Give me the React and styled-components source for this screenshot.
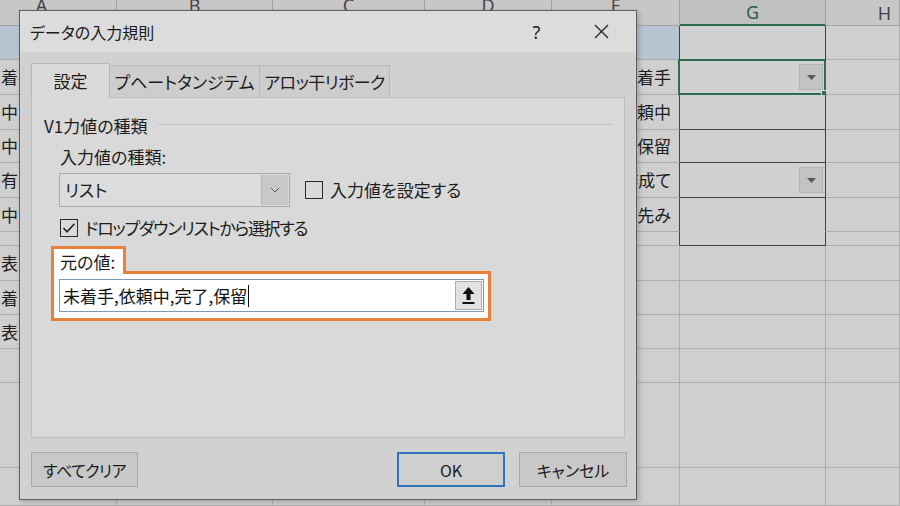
import React from 'react';
import styled, { createGlobalStyle } from 'styled-components';

const GlobalStyle = createGlobalStyle`
  html, body { margin: 0; padding: 0; }
  body {
    width: 900px; height: 506px; overflow: hidden;
    background: #cfcfcf;
    font-family: "Noto Sans CJK JP", "Noto Sans", sans-serif;
    font-feature-settings: "palt";
    color: #1c1c1c;
  }
  #root { position: relative; width: 900px; height: 506px; overflow: hidden; }
`;

const ORANGE = '#e8823a';
const GRID = '#adadad';
const DARK = '#3f3f3f';

/* ---------------- spreadsheet ---------------- */
const Sheet = styled.div`
  display: grid;
  grid-template-columns: 117px 156px 152px 127px 128px 146px 1fr;
  grid-template-rows: 26px 34px 35px 35px 33px 35px 34px 14px 35px 34px 34px 34px 85px 1fr;
  width: 900px;
  height: 506px;
`;

const HeadCell = styled.div`
  box-sizing: border-box;
  display: flex;
  justify-content: center;
  align-items: ${(p) => (p.$raised ? 'flex-start' : 'center')};
  padding: 0 ${(p) => p.$pr || 0}px 0 ${(p) => p.$pl || 0}px;
  background: ${(p) => (p.$sel ? '#c1c1c1' : '#c7c7c7')};
  border-right: 1px solid #a3a3a3;
  border-bottom: ${(p) => (p.$sel ? `2px solid #2f6b4c` : '1px solid #a3a3a3')};
  font-family: "Noto Sans", "Noto Sans CJK JP", sans-serif;
  font-size: 18px;
  line-height: 20px;
  color: ${(p) => (p.$sel ? '#2f5a44' : '#444')};
  overflow: hidden;
  & > span { margin-top: ${(p) => (p.$raised ? '-5px' : '0')}; }
`;

const Cell = styled.div`
  box-sizing: border-box;
  position: relative;
  display: flex;
  align-items: center;
  justify-content: ${(p) => (p.$right ? 'flex-end' : 'flex-start')};
  padding: 0 ${(p) => (p.$right ? 8 : 1)}px 0 1px;
  background: ${(p) => (p.$blue ? '#b7c5d3' : '#cfcfcf')};
  border-right: 1px solid ${(p) => (p.$darkRight ? DARK : GRID)};
  border-bottom: ${(p) => (p.$noBottom ? '1px solid transparent' : `1px solid ${p.$darkBottom ? DARK : GRID}`)};
  font-size: 17px;
  line-height: 20px;
  white-space: nowrap;
  overflow: hidden;
`;

const BoxCell = styled(Cell)`
  overflow: visible;
  justify-content: flex-end;
  padding-right: 2px;
  background: #d1d1d1;
`;

const ActiveFrame = styled.div`
  position: absolute;
  left: -2px; top: -1px; right: -1px; bottom: -1px;
  border: 2px solid #2f6b4c;
  pointer-events: none;
`;

const FillHandle = styled.div`
  position: absolute;
  right: -3px; bottom: -3px;
  width: 5px; height: 5px;
  background: #2f6b4c;
  border: 1px solid #e0e0e0;
`;

const CellDrop = styled.div`
  box-sizing: border-box;
  width: 24px; height: 26px;
  display: flex; align-items: center; justify-content: center;
  background: #c3c3c3;
  border: 1px solid #b3b3b3;
`;

const DropTri = () => (
  <svg width="9" height="5" viewBox="0 0 9 5"><polygon points="0,0 9,0 4.5,5" fill="#5a5a5a" /></svg>
);

const HEADS = [
  { l: 'A', pr: 33, raised: true },
  { l: 'B', raised: true },
  { l: 'C', raised: true },
  { l: 'D', raised: true },
  { l: 'F', raised: true },
  { l: 'G', sel: true },
  { l: 'H', pl: 44 },
];

const A_TEXT = ['', '着手', '中', '中', '有', '中', '', '表', '着', '表', '', '', ''];
const F_TEXT = ['', '未着手', '依頼中', '保留', '作成て', '優先み', '', '', '', '', '', '', ''];

function SheetView() {
  const rows = [];
  for (let r = 0; r < 13; r++) {
    const blue = r === 0;
    const inBox = r <= 6;
    rows.push(
      <React.Fragment key={r}>
        <Cell $blue={blue}>{A_TEXT[r]}</Cell>
        <Cell $blue={blue} />
        <Cell $blue={blue} />
        <Cell $blue={blue} />
        <Cell $blue={blue} $right $darkRight={inBox}>{F_TEXT[r]}</Cell>
        {inBox ? (
          <BoxCell $darkRight $darkBottom $noBottom={r === 5}>
            {r === 1 && (
              <>
                <CellDrop><DropTri /></CellDrop>
                <ActiveFrame />
                <FillHandle />
              </>
            )}
            {r === 4 && <CellDrop><DropTri /></CellDrop>}
          </BoxCell>
        ) : (
          <Cell />
        )}
        <Cell />
      </React.Fragment>
    );
  }
  return (
    <Sheet>
      {HEADS.map((h) => (
        <HeadCell key={h.l} $pr={h.pr} $pl={h.pl} $raised={h.raised} $sel={h.sel}>
          <span>{h.l}</span>
        </HeadCell>
      ))}
      {rows}
    </Sheet>
  );
}

/* ---------------- dialog ---------------- */
const Dialog = styled.div`
  position: absolute;
  left: 19px; top: 10px;
  width: 618px; height: 490px;
  box-sizing: border-box;
  border: 1px solid #5f5f5f;
  background: #d1d1d1;
  box-shadow: 2px 2px 5px rgba(0, 0, 0, 0.22);
  display: flex;
  flex-direction: column;
`;

const TitleBar = styled.div`
  height: 41px;
  flex: none;
  display: flex;
  align-items: center;
  padding: 0 2px 0 10px;
  background: #dcdcdc;
`;

const Title = styled.div`
  flex: 1;
  font-size: 16px;
  line-height: 20px;
  color: #1a1a1a;
`;

const TitleBtn = styled.div`
  width: 65px;
  height: 41px;
  display: flex;
  align-items: center;
  justify-content: center;
  font-family: "Noto Sans", sans-serif;
  font-size: 18px;
  color: #222;
`;

const TabStrip = styled.div`
  height: 45px;
  flex: none;
  box-sizing: border-box;
  display: flex;
  align-items: flex-end;
  padding-left: 11px;
`;

const Tab = styled.div`
  box-sizing: border-box;
  width: ${(p) => p.$w}px;
  height: ${(p) => (p.$active ? 35 : 32)}px;
  display: flex;
  align-items: center;
  justify-content: center;
  border: 1px solid #b7b7b7;
  border-bottom: none;
  border-left: ${(p) => (p.$first ? '1px solid #b7b7b7' : 'none')};
  background: ${(p) => (p.$active ? '#d9d9d9' : '#cdcdcd')};
  font-size: 17px;
  line-height: 20px;
  letter-spacing: ${(p) => p.$ls || 0}px;
  position: relative;
  z-index: ${(p) => (p.$active ? 1 : 0)};
  margin-bottom: ${(p) => (p.$active ? '-1px' : '0')};
  padding-bottom: ${(p) => (p.$active ? '1px' : '0')};
`;

const Panel = styled.div`
  height: 341px;
  flex: none;
  box-sizing: border-box;
  margin: 0 11px;
  border: 1px solid #bdbdbd;
  background: #d9d9d9;
  padding: 0 11px 0 12px;
  display: flex;
  flex-direction: column;
`;

const Heading = styled.div`
  margin-top: 18px;
  height: 20px;
  display: flex;
  align-items: center;
  font-size: 17px;
  line-height: 20px;
`;

const Rule = styled.div`
  flex: 1;
  height: 1px;
  margin-left: 10px;
  margin-top: -3px;
  background: #c3c3c3;
`;

const FieldBody = styled.div`
  margin-left: 15px;
  display: flex;
  flex-direction: column;
`;

const FieldLabel = styled.div`
  margin-top: ${(p) => p.$mt || 0}px;
  padding-left: 1px;
  font-size: 17px;
  line-height: 20px;
`;

const SelectRow = styled.div`
  margin-top: 6px;
  display: flex;
  align-items: center;
  gap: 15px;
`;

const Select = styled.div`
  box-sizing: border-box;
  width: 231px;
  height: 34px;
  display: flex;
  align-items: stretch;
  border: 1px solid #a9a9a9;
  background: #dcdcdc;
  padding: 1px;
`;

const SelectValue = styled.div`
  flex: 1;
  display: flex;
  align-items: center;
  padding-left: 4px;
  font-size: 17px;
  line-height: 20px;
`;

const SelectArrow = styled.div`
  width: 26px;
  display: flex;
  align-items: center;
  justify-content: center;
  background: #c8c8c8;
  border-left: 1px solid #b8b8b8;
`;

const CheckLine = styled.label`
  display: flex;
  align-items: center;
  gap: 7px;
  margin-top: ${(p) => p.$mt || 0}px;
  padding-left: ${(p) => p.$pl || 0}px;
  height: 20px;
  font-size: 17px;
  line-height: 20px;
  letter-spacing: ${(p) => p.$ls || 0}px;
  white-space: nowrap;
`;

const Box = styled.div`
  box-sizing: border-box;
  width: 18px;
  height: 18px;
  border: 1.5px solid #2a2a2a;
  display: flex;
  align-items: center;
  justify-content: center;
  background: #dadada;
`;

const Highlight = styled.div`
  margin-top: 8px;
  margin-left: 7px;
  display: flex;
  flex-direction: column;
  align-items: flex-start;
`;

const HighlightTab = styled.div`
  box-sizing: border-box;
  width: 75px;
  height: 28px;
  border: 3px solid ${ORANGE};
  border-bottom: none;
  background: #fdfdfd;
  margin-bottom: -3px;
  position: relative;
  z-index: 1;
  padding: 3px 0 0 6px;
  font-size: 17px;
  line-height: 20px;
`;

const HighlightBox = styled.div`
  box-sizing: border-box;
  width: 440px;
  border: 3px solid ${ORANGE};
  background: #fdfdfd;
  padding: 5px 4px 6px 5px;
`;

const SourceInput = styled.div`
  box-sizing: border-box;
  height: 33px;
  display: flex;
  align-items: center;
  border: 1px solid #7d9ab6;
  background: #ffffff;
  padding: 0 1px 0 3px;
`;

const InputText = styled.span`
  font-size: 17px;
  line-height: 22px;
  color: #111;
`;

const Caret = styled.span`
  width: 1px;
  height: 22px;
  margin-left: 1px;
  background: #111;
`;

const Grow = styled.div`
  flex: 1;
`;

const UploadBtn = styled.div`
  box-sizing: border-box;
  width: 27px;
  height: 29px;
  display: flex;
  align-items: center;
  justify-content: center;
  background: #e2e2e2;
  border: 1px solid #acacac;
`;

const Footer = styled.div`
  flex: 1;
  display: flex;
  align-items: flex-start;
  padding: 14px 9px 0 11px;
  gap: 14px;
`;

const Button = styled.div`
  box-sizing: border-box;
  width: ${(p) => p.$w}px;
  height: 35px;
  display: flex;
  align-items: center;
  justify-content: center;
  background: ${(p) => (p.$primary ? '#cfcfcf' : '#c8c8c8')};
  border: ${(p) => (p.$primary ? '2px solid #2f73ba' : '1px solid #a9a9a9')};
  font-size: 16px;
  line-height: 20px;
  letter-spacing: ${(p) => p.$ls || 0}px;
  color: #1a1a1a;
`;

const CloseIcon = () => (
  <svg width="15" height="15" viewBox="0 0 15 15">
    <path d="M1 1 L14 14 M14 1 L1 14" stroke="#222" strokeWidth="1.3" fill="none" />
  </svg>
);

const Chevron = () => (
  <svg width="10" height="6" viewBox="0 0 10 6">
    <path d="M1 1 L5 5 L9 1" stroke="#5a5a5a" strokeWidth="1" fill="none" />
  </svg>
);

const Tick = () => (
  <svg width="14" height="12" viewBox="0 0 14 12">
    <path d="M1.5 6 L5 9.8 L12.5 1.8" stroke="#1e1e1e" strokeWidth="1.5" fill="none" />
  </svg>
);

const UploadIcon = () => (
  <svg width="15" height="19" viewBox="0 0 15 19">
    <path d="M7.5 1 L13.5 8 H9.5 V14 H5.5 V8 H1.5 Z" fill="#111" />
    <rect x="1.5" y="16" width="12" height="2" fill="#111" />
  </svg>
);

export default function App() {
  return (
    <>
      <GlobalStyle />
      <SheetView />
      <Dialog>
        <TitleBar>
          <Title>データの入力規則</Title>
          <TitleBtn>?</TitleBtn>
          <TitleBtn><CloseIcon /></TitleBtn>
        </TitleBar>
        <TabStrip>
          <Tab $w={79} $active $first>設定</Tab>
          <Tab $w={150}>プヘートタンジテム</Tab>
          <Tab $w={130} $ls={-0.6}>アロッ干リボーク</Tab>
        </TabStrip>
        <Panel>
          <Heading>
            V1力値の種類
            <Rule />
          </Heading>
          <FieldBody>
            <FieldLabel $mt={11}>入力値の種類:</FieldLabel>
            <SelectRow>
              <Select>
                <SelectValue>リスト</SelectValue>
                <SelectArrow><Chevron /></SelectArrow>
              </Select>
              <CheckLine>
                <Box />
                入力値を設定する
              </CheckLine>
            </SelectRow>
            <CheckLine $mt={11} $pl={1} $ls={-1.3}>
              <Box><Tick /></Box>
              ドロップダウンリストから選択する
            </CheckLine>
          </FieldBody>
          <Highlight>
            <HighlightTab>元の値:</HighlightTab>
            <HighlightBox>
              <SourceInput>
                <InputText>未着手,依頼中,完了,保留</InputText>
                <Caret />
                <Grow />
                <UploadBtn><UploadIcon /></UploadBtn>
              </SourceInput>
            </HighlightBox>
          </Highlight>
        </Panel>
        <Footer>
          <Button $w={107} $ls={-0.6}>すべてクリア</Button>
          <Grow />
          <Button $w={108} $primary>OK</Button>
          <Button $w={108}>キャンセル</Button>
        </Footer>
      </Dialog>
    </>
  );
}
